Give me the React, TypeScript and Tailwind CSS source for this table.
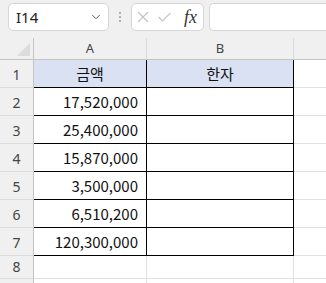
import React from 'react';
import { ChevronDown } from 'lucide-react';

const rows = [
  { n: 1, a: '금액', b: '한자', head: true },
  { n: 2, a: '17,520,000', b: '' },
  { n: 3, a: '25,400,000', b: '' },
  { n: 4, a: '15,870,000', b: '' },
  { n: 5, a: '3,500,000', b: '' },
  { n: 6, a: '6,510,200', b: '' },
  { n: 7, a: '120,300,000', b: '' },
];

const ui = { fontFamily: '"Noto Sans", "Open Sans", sans-serif' };
const cell = { fontFamily: '"Noto Sans CJK KR", "Noto Sans", sans-serif' };

export default function App() {
  return (
    <div className="w-[326px] h-[283px] overflow-hidden bg-white" style={ui}>
      {/* Formula bar */}
      <div className="h-[38px] bg-[#f0f0f0] flex items-start pt-[3px] pl-[8px]">
        <div className="w-[101px] h-[28px] bg-white border border-[#d6d6d6] rounded-[5px] flex items-center pl-[7px] pr-[5px]">
          <span className="flex-1 text-[15px] text-[#222]">I14</span>
          <ChevronDown size={14} strokeWidth={1.6} className="text-[#555]" />
        </div>
        <div className="w-[22px] h-[28px] flex flex-col items-center justify-center gap-[2px]">
          <span className="w-[2px] h-[2px] bg-[#999] rounded-full" />
          <span className="w-[2px] h-[2px] bg-[#999] rounded-full" />
          <span className="w-[2px] h-[2px] bg-[#999] rounded-full" />
        </div>
        <div className="w-[73px] h-[28px] bg-white border border-[#d6d6d6] rounded-[5px] flex items-center pl-[5px] gap-[9px]">
          <svg width="12" height="12" viewBox="0 0 12 12" className="shrink-0">
            <path d="M1 1 L11 11 M11 1 L1 11" stroke="#c4c4c4" strokeWidth="1.2" fill="none" />
          </svg>
          <svg width="13" height="10" viewBox="0 0 13 10" className="shrink-0">
            <path d="M0.5 5 L4.5 9 L12.5 0.8" stroke="#c4c4c4" strokeWidth="1.2" fill="none" />
          </svg>
          <span className="text-[18px] italic text-[#333] leading-none ml-[4px]" style={{ fontFamily: '"Liberation Serif", serif' }}>fx</span>
        </div>
        <div className="ml-[5px] flex-1 h-[28px] bg-white border border-[#d6d6d6] rounded-l-[5px] border-r-0" />
      </div>

      {/* Column headers */}
      <div className="flex h-[22px] bg-[#f0f0f0] border-b border-[#c4c4c4] text-[13px] text-[#444]">
        <div className="w-[34px] border-r border-[#c4c4c4] flex items-end justify-end pr-[3px] pb-[3px]">
          <svg width="13" height="13" viewBox="0 0 13 13">
            <path d="M13 0 L13 13 L0 13 Z" fill="#dcdcdc" />
          </svg>
        </div>
        <div className="w-[113px] border-r border-[#d9d9d9] flex items-center justify-center">A</div>
        <div className="w-[147px] border-r border-[#d9d9d9] flex items-center justify-center">B</div>
        <div className="flex-1" />
      </div>

      {/* Body */}
      {rows.map(r => (
        <div key={r.n} className="flex h-[28px]">
          <div className="w-[34px] bg-[#f0f0f0] border-r border-[#c4c4c4] border-b border-b-[#dcdcdc] text-[14px] text-[#444] flex items-end justify-center pb-[2px]">
            {r.n}
          </div>
          <div
            className={`w-[113px] border-r border-b border-black text-[15px] text-[#111] flex items-end pb-[2px] ${r.head ? 'bg-[#d9e1f2] justify-center' : 'justify-end pr-[8px]'}`}
            style={cell}
          >
            {r.a}
          </div>
          <div
            className={`w-[147px] border-r border-b border-black text-[15px] text-[#111] flex items-end justify-center pb-[2px] ${r.head ? 'bg-[#d9e1f2]' : ''}`}
            style={cell}
          >
            {r.b}
          </div>
          <div className="flex-1 border-b border-[#e1e1e1]" />
        </div>
      ))}

      {/* Empty rows */}
      {[8, 9].map(n => (
        <div key={n} className="flex h-[23px]">
          <div className="w-[34px] bg-[#f0f0f0] border-r border-[#c4c4c4] border-b border-b-[#dcdcdc] text-[14px] text-[#444] flex items-end justify-center pb-[1px]">
            {n === 8 ? 8 : ''}
          </div>
          <div className="w-[113px] border-r border-b border-[#e1e1e1]" />
          <div className="w-[147px] border-r border-b border-[#e1e1e1]" />
          <div className="flex-1 border-b border-[#e1e1e1]" />
        </div>
      ))}
    </div>
  );
}
